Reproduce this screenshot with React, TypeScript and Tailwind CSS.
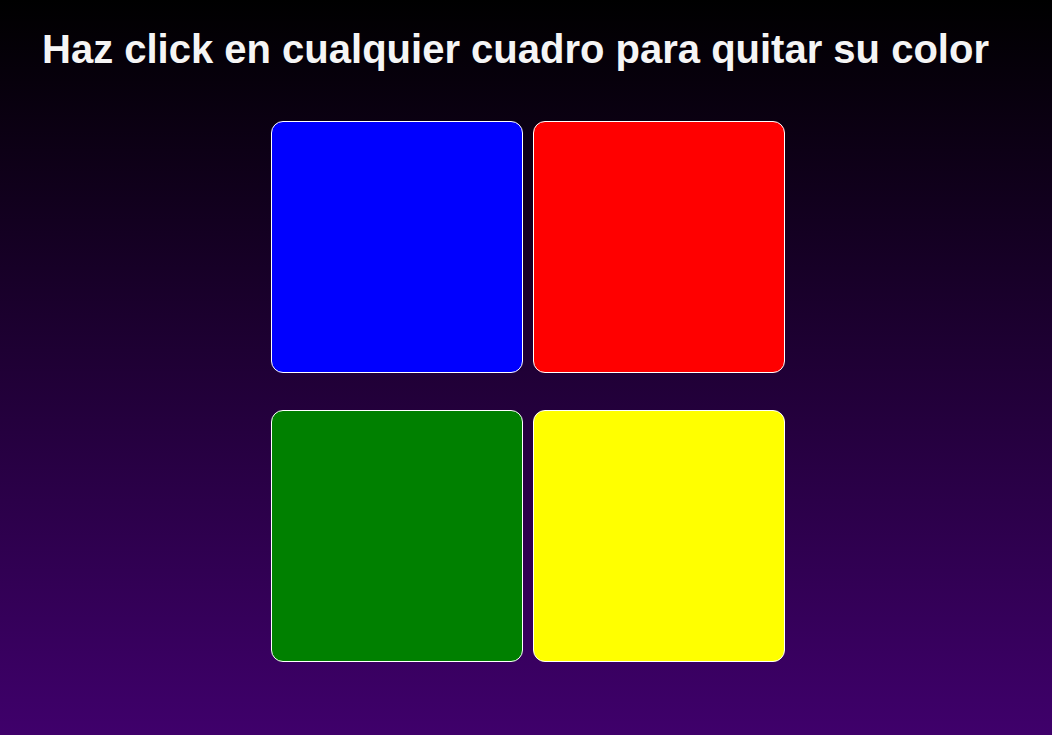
export default function App() {
  const colors = [
    ["bg-[#0000ff]", "bg-[#ff0000]"],
    ["bg-[#008000]", "bg-[#ffff00]"],
  ];
  return (
    <div
      className="min-h-[735px] w-full bg-[linear-gradient(to_bottom,#000000,#3f006b)] text-white"
      style={{ fontFamily: '"Liberation Sans", Arial, sans-serif' }}
    >
      <h1 className="pt-[27px] pl-[42px] text-[40px] font-bold leading-[44px] text-[#f5f5f5]">
        Haz click en cualquier cuadro para quitar su color
      </h1>
      <div className="mt-[50px] flex flex-col items-center gap-[37px] pl-[4px]">
        {colors.map((row, i) => (
          <div key={i} className="flex gap-[10px]">
            {row.map((c) => (
              <div
                key={c}
                className={`h-[252px] w-[252px] rounded-[12px] border border-white ${c}`}
              />
            ))}
          </div>
        ))}
      </div>
    </div>
  );
}
